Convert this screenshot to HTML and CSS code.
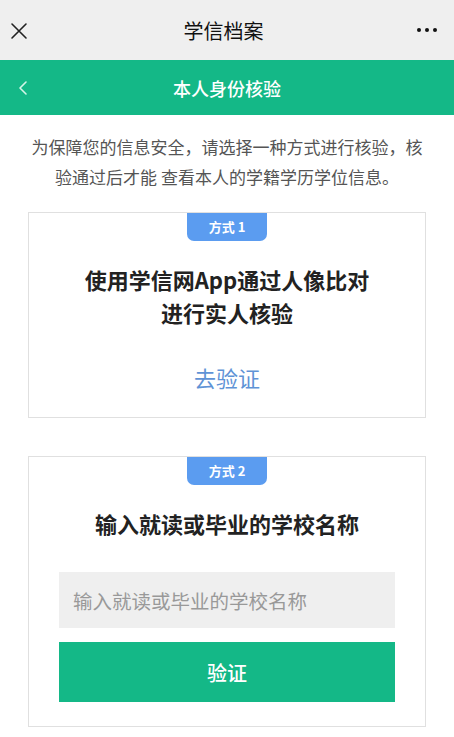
FILE: index.html
```html
<!DOCTYPE html>
<html lang="zh-CN">
<head>
    <meta charset="UTF-8">
    <title>学信档案 - 本人身份核验</title>
    <link rel="stylesheet" href="styles.css">
</head>
<body>
    <header class="topbar">
        <span class="topbar-side">
            <svg class="close-icon" width="18" height="18" viewBox="0 0 18 18"><path d="M2 2 L16 16 M16 2 L2 16" stroke="#222" stroke-width="1.6" fill="none" stroke-linecap="round"/></svg>
        </span>
        <div class="topbar-title">学信档案</div>
        <span class="topbar-side right">
            <span class="dots"><i></i><i></i><i></i></span>
        </span>
    </header>
    <nav class="subbar">
        <span class="subbar-side">
            <svg width="10" height="14" viewBox="0 0 10 14"><path d="M8 1 L2 7 L8 13" stroke="#d4f5e8" stroke-width="1.6" fill="none" stroke-linecap="round" stroke-linejoin="round"/></svg>
        </span>
        <div class="subbar-title">本人身份核验</div>
        <span class="subbar-side"></span>
    </nav>
    <main class="main-content">
        <p class="intro">为保障您的信息安全，请选择一种方式进行核验，核验通过后才能 查看本人的学籍学历学位信息。</p>

        <section class="method-card">
            <div class="badge">方式 1</div>
            <h3 class="method-title">使用学信网App通过人像比对<br>进行实人核验</h3>
            <a href="#" class="go-link">去验证</a>
        </section>

        <section class="method-card second">
            <div class="badge">方式 2</div>
            <h3 class="method-title">输入就读或毕业的学校名称</h3>
            <input type="text" class="school-input" placeholder="输入就读或毕业的学校名称">
            <button class="verify-btn">验证</button>
        </section>
    </main>
</body>
</html>
```

FILE: styles.css
```css
body { margin: 0; font-family: "Noto Sans CJK SC", "Noto Sans", sans-serif; background-color: #fff; color: #222; }
.topbar { display: flex; align-items: center; justify-content: space-between; height: 60px; background-color: #efefef; padding: 0 10px; box-sizing: border-box; }
.topbar-side { width: 60px; display: flex; align-items: center; }
.topbar-side.right { justify-content: flex-end; padding-right: 7px; }
.close-icon { margin-top: 1px; }
.topbar-title { font-size: 20px; color: #111; }
.dots { display: flex; gap: 4px; }
.dots i { width: 4px; height: 4px; border-radius: 50%; background: #111; }
.subbar { display: flex; align-items: center; justify-content: space-between; height: 55px; background-color: #14b887; padding: 0 18px; box-sizing: border-box; }
.subbar-side { width: 40px; display: flex; align-items: center; }
.subbar-title { font-size: 18px; font-weight: 500; color: #fff; }
.main-content { padding: 17px 28px 0; }
.intro { margin: 0; text-align: center; font-size: 17px; line-height: 30px; color: #555; }
.method-card { margin-top: 20px; border: 1px solid #e0e0e0; display: flex; flex-direction: column; align-items: center; padding: 0 30px 25px; }
.method-card.second { margin-top: 38px; padding-bottom: 24px; }
.badge { width: 80px; height: 28px; line-height: 28px; text-align: center; background-color: #5b9cf0; color: #fff; font-size: 13px; font-weight: bold; border-radius: 0 0 7px 7px; }
.method-title { margin: 22px 0 0; text-align: center; font-size: 22px; line-height: 33px; font-weight: bold; color: #222; }
.go-link { margin-top: 33px; font-size: 22px; line-height: 30px; color: #5f93d6; text-decoration: none; }
.school-input { margin-top: 32px; width: 100%; height: 56px; box-sizing: border-box; border: none; background-color: #efefef; padding: 0 14px; font-family: inherit; font-size: 19.5px; color: #333; outline: none; }
.school-input::placeholder { color: #999; }
.verify-btn { margin-top: 14px; width: 100%; height: 60px; border: none; background-color: #14b887; color: #fff; font-family: inherit; font-size: 20px; font-weight: 500; cursor: pointer; }
```
